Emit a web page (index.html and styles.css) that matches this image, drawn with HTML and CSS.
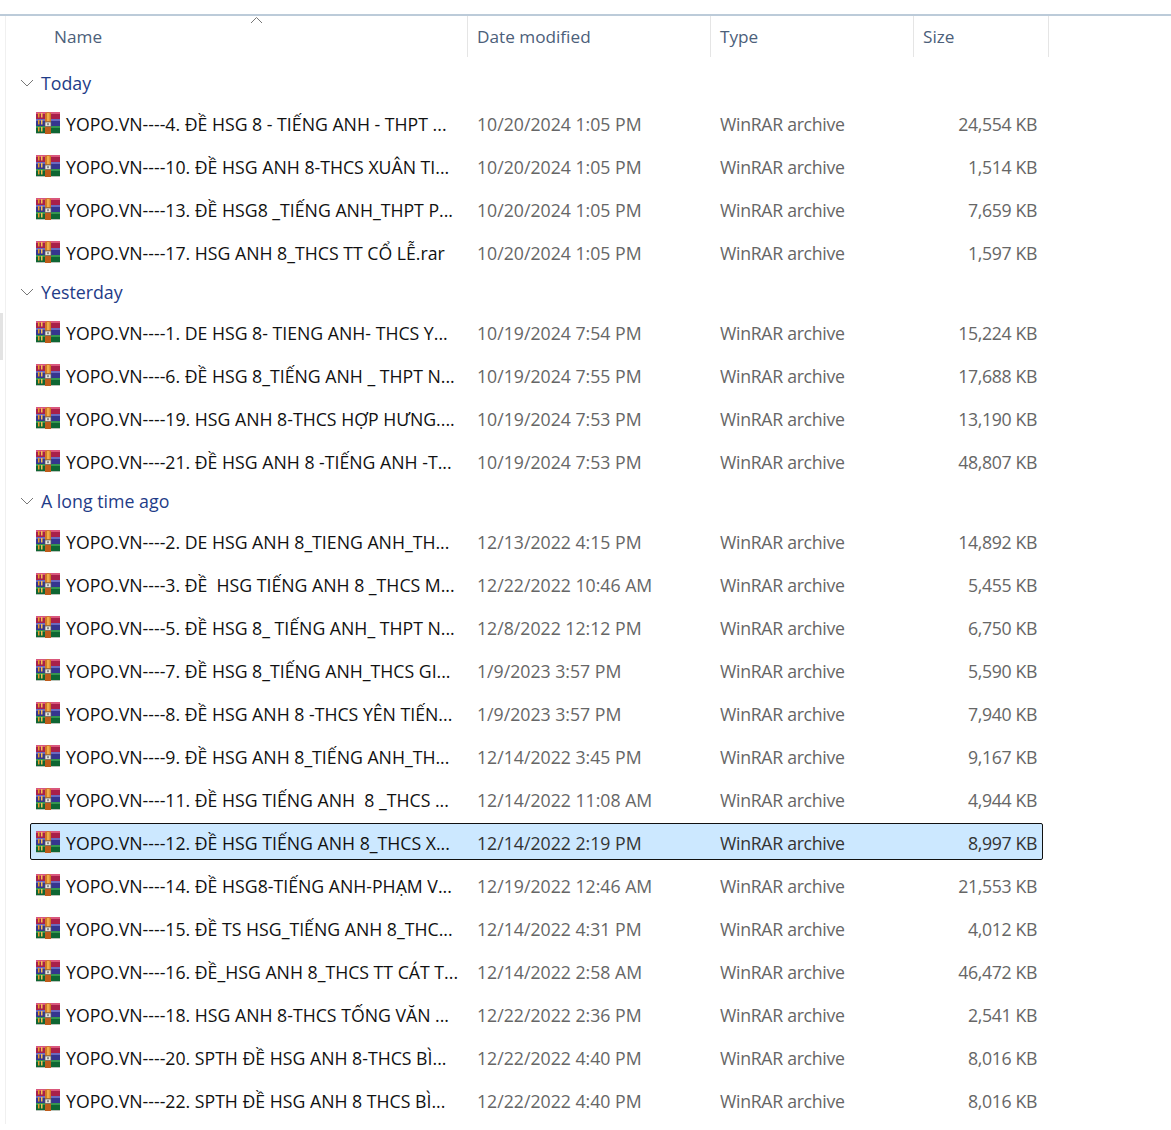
FILE: index.html
```html
<!DOCTYPE html>
<html lang="vi">
<head>
  <meta charset="UTF-8" />
  <title>Files</title>
  <link rel="stylesheet" href="styles.css">
</head>
<body>

<svg class="defs" width="0" height="0">
  <symbol id="rar" viewBox="0 0 24 22">
    <rect x="0" y="0" width="24" height="7" fill="#a8204a"/>
    <rect x="0" y="0" width="24" height="2" fill="#d9577c"/>
    <rect x="0" y="7" width="24" height="7" fill="#35358f"/>
    <rect x="0" y="7" width="24" height="2" fill="#6a6abf"/>
    <rect x="0" y="14" width="24" height="7" fill="#0f6633"/>
    <rect x="0" y="14" width="24" height="2" fill="#35964f"/>
    <rect y="21" width="24" height="1" fill="#b9c4bb"/>
    <rect x="2" y="1" width="1.500" height="4.500" fill="#e99a2a"/>
    <rect x="2" y="8" width="1.500" height="4.500" fill="#e99a2a"/>
    <rect x="2" y="15" width="1.500" height="4.500" fill="#e99a2a"/>
    <rect x="5" y="1" width="1.500" height="4.500" fill="#f2bf55"/>
    <rect x="5" y="8" width="1.500" height="4.500" fill="#f2bf55"/>
    <rect x="5" y="15" width="1.500" height="4.500" fill="#f2bf55"/>
    <path d="M9 1 L12 0 L15 1 V22 H9 Z" fill="#d17a26"/>
    <rect x="11" y="1" width="2.500" height="8" fill="#f0ad48"/>
    <rect x="9" y="10" width="6" height="4.500" fill="#e8e6df" stroke="#5a5a5a" stroke-width="0.700"/>
    <rect x="11" y="11.200" width="2" height="2" fill="#8a8a8a"/>
    <rect x="9" y="15" width="6" height="7" fill="#bd5c1c"/>
  </symbol>
</svg>

<div class="window">
  <div class="rail"><span class="thumb"></span></div>
  <main class="pane">
    <div class="headers">
      <div class="col col-name">Name
        <svg class="sort" width="13" height="8" viewBox="0 0 13 8"><path d="M1 7 L6.500 1.500 L12 7" fill="none" stroke="#777" stroke-width="1"/></svg>
      </div>
      <div class="col col-date">Date modified</div>
      <div class="col col-type">Type</div>
      <div class="col col-size">Size</div>
    </div>

    <div class="group"><svg class="chev" width="14" height="8" viewBox="0 0 14 8"><path d="M1 1 L7 7 L13 1" fill="none" stroke="#777" stroke-width="1"/></svg>Today</div>
    <div class="row"><svg class="icon"><use href="#rar"/></svg><span class="name">YOPO.VN----4. ĐỀ HSG 8 - TIẾNG ANH - THPT ...</span><span class="date">10/20/2024 1:05 PM</span><span class="type">WinRAR archive</span><span class="size">24,554 KB</span></div>
    <div class="row"><svg class="icon"><use href="#rar"/></svg><span class="name">YOPO.VN----10. ĐỀ HSG ANH 8-THCS XUÂN TI...</span><span class="date">10/20/2024 1:05 PM</span><span class="type">WinRAR archive</span><span class="size">1,514 KB</span></div>
    <div class="row"><svg class="icon"><use href="#rar"/></svg><span class="name">YOPO.VN----13. ĐỀ HSG8 _TIẾNG ANH_THPT P...</span><span class="date">10/20/2024 1:05 PM</span><span class="type">WinRAR archive</span><span class="size">7,659 KB</span></div>
    <div class="row"><svg class="icon"><use href="#rar"/></svg><span class="name">YOPO.VN----17. HSG ANH 8_THCS TT CỔ LỄ.rar</span><span class="date">10/20/2024 1:05 PM</span><span class="type">WinRAR archive</span><span class="size">1,597 KB</span></div>

    <div class="group"><svg class="chev" width="14" height="8" viewBox="0 0 14 8"><path d="M1 1 L7 7 L13 1" fill="none" stroke="#777" stroke-width="1"/></svg>Yesterday</div>
    <div class="row"><svg class="icon"><use href="#rar"/></svg><span class="name">YOPO.VN----1. DE HSG 8- TIENG ANH- THCS Y...</span><span class="date">10/19/2024 7:54 PM</span><span class="type">WinRAR archive</span><span class="size">15,224 KB</span></div>
    <div class="row"><svg class="icon"><use href="#rar"/></svg><span class="name">YOPO.VN----6. ĐỀ HSG 8_TIẾNG ANH _ THPT N...</span><span class="date">10/19/2024 7:55 PM</span><span class="type">WinRAR archive</span><span class="size">17,688 KB</span></div>
    <div class="row"><svg class="icon"><use href="#rar"/></svg><span class="name">YOPO.VN----19. HSG ANH 8-THCS HỢP HƯNG....</span><span class="date">10/19/2024 7:53 PM</span><span class="type">WinRAR archive</span><span class="size">13,190 KB</span></div>
    <div class="row"><svg class="icon"><use href="#rar"/></svg><span class="name">YOPO.VN----21. ĐỀ HSG ANH 8 -TIẾNG ANH -T...</span><span class="date">10/19/2024 7:53 PM</span><span class="type">WinRAR archive</span><span class="size">48,807 KB</span></div>

    <div class="group"><svg class="chev" width="14" height="8" viewBox="0 0 14 8"><path d="M1 1 L7 7 L13 1" fill="none" stroke="#777" stroke-width="1"/></svg>A long time ago</div>
    <div class="row"><svg class="icon"><use href="#rar"/></svg><span class="name">YOPO.VN----2. DE HSG ANH 8_TIENG ANH_TH...</span><span class="date">12/13/2022 4:15 PM</span><span class="type">WinRAR archive</span><span class="size">14,892 KB</span></div>
    <div class="row"><svg class="icon"><use href="#rar"/></svg><span class="name">YOPO.VN----3. ĐỀ &nbsp;HSG TIẾNG ANH 8 _THCS M...</span><span class="date">12/22/2022 10:46 AM</span><span class="type">WinRAR archive</span><span class="size">5,455 KB</span></div>
    <div class="row"><svg class="icon"><use href="#rar"/></svg><span class="name">YOPO.VN----5. ĐỀ HSG 8_ TIẾNG ANH_ THPT N...</span><span class="date">12/8/2022 12:12 PM</span><span class="type">WinRAR archive</span><span class="size">6,750 KB</span></div>
    <div class="row"><svg class="icon"><use href="#rar"/></svg><span class="name">YOPO.VN----7. ĐỀ HSG 8_TIẾNG ANH_THCS GI...</span><span class="date">1/9/2023 3:57 PM</span><span class="type">WinRAR archive</span><span class="size">5,590 KB</span></div>
    <div class="row"><svg class="icon"><use href="#rar"/></svg><span class="name">YOPO.VN----8. ĐỀ HSG ANH 8 -THCS YÊN TIẾN...</span><span class="date">1/9/2023 3:57 PM</span><span class="type">WinRAR archive</span><span class="size">7,940 KB</span></div>
    <div class="row"><svg class="icon"><use href="#rar"/></svg><span class="name">YOPO.VN----9. ĐỀ HSG ANH 8_TIẾNG ANH_TH...</span><span class="date">12/14/2022 3:45 PM</span><span class="type">WinRAR archive</span><span class="size">9,167 KB</span></div>
    <div class="row"><svg class="icon"><use href="#rar"/></svg><span class="name">YOPO.VN----11. ĐỀ HSG TIẾNG ANH &nbsp;8 _THCS ...</span><span class="date">12/14/2022 11:08 AM</span><span class="type">WinRAR archive</span><span class="size">4,944 KB</span></div>
    <div class="row selected"><svg class="icon"><use href="#rar"/></svg><span class="name">YOPO.VN----12. ĐỀ HSG TIẾNG ANH 8_THCS X...</span><span class="date">12/14/2022 2:19 PM</span><span class="type">WinRAR archive</span><span class="size">8,997 KB</span></div>
    <div class="row"><svg class="icon"><use href="#rar"/></svg><span class="name">YOPO.VN----14. ĐỀ HSG8-TIẾNG ANH-PHẠM V...</span><span class="date">12/19/2022 12:46 AM</span><span class="type">WinRAR archive</span><span class="size">21,553 KB</span></div>
    <div class="row"><svg class="icon"><use href="#rar"/></svg><span class="name">YOPO.VN----15. ĐỀ TS HSG_TIẾNG ANH 8_THC...</span><span class="date">12/14/2022 4:31 PM</span><span class="type">WinRAR archive</span><span class="size">4,012 KB</span></div>
    <div class="row"><svg class="icon"><use href="#rar"/></svg><span class="name">YOPO.VN----16. ĐỀ_HSG ANH 8_THCS TT CÁT T...</span><span class="date">12/14/2022 2:58 AM</span><span class="type">WinRAR archive</span><span class="size">46,472 KB</span></div>
    <div class="row"><svg class="icon"><use href="#rar"/></svg><span class="name">YOPO.VN----18. HSG ANH 8-THCS TỐNG VĂN ...</span><span class="date">12/22/2022 2:36 PM</span><span class="type">WinRAR archive</span><span class="size">2,541 KB</span></div>
    <div class="row"><svg class="icon"><use href="#rar"/></svg><span class="name">YOPO.VN----20. SPTH ĐỀ HSG ANH 8-THCS BÌ...</span><span class="date">12/22/2022 4:40 PM</span><span class="type">WinRAR archive</span><span class="size">8,016 KB</span></div>
    <div class="row"><svg class="icon"><use href="#rar"/></svg><span class="name">YOPO.VN----22. SPTH ĐỀ HSG ANH 8 THCS BÌ...</span><span class="date">12/22/2022 4:40 PM</span><span class="type">WinRAR archive</span><span class="size">8,016 KB</span></div>
  </main>
</div>

</body>
</html>
```

FILE: styles.css
```css
html, body {
  margin: 0;
  padding: 0;
  background: white;
}
body {
  font-family: 'Open Sans', 'Noto Sans', sans-serif;
  font-size: 17.7px;
  color: #666;
  height: 1130px;
  overflow: hidden;
}
.defs {
  display: block;
  height: 0;
}
.window {
  margin-top: 14px;
  border-top: 2px solid #bccbd9;
  display: flex;
  height: 1108px;
}
.rail {
  width: 5px;
  border-right: 1px solid #f0f0f0;
  padding-top: 297px;
}
.thumb {
  display: block;
  width: 3px;
  height: 47px;
  background: #e3e3e3;
}
.pane {
  flex: 1;
  padding-left: 24px;
}
.headers {
  display: grid;
  grid-template-columns: 438px 243px 203px 135px;
  height: 41px;
  margin-bottom: 13.5px;
  color: #4c607a;
  font-size: 17.2px;
}
.col {
  display: flex;
  align-items: center;
  border-right: 1px solid #e5e5e5;
  padding-left: 9px;
  box-sizing: border-box;
  position: relative;
}
.col-name {
  padding-left: 24px;
}
.sort {
  position: absolute;
  left: 220px;
  top: 0;
}
.group {
  height: 25px;
  margin-top: 8px;
  margin-bottom: 10px;
  margin-left: -10px;
  display: flex;
  align-items: center;
  gap: 7px;
  color: #1f3c88;
  font-size: 17.8px;
}
.row {
  display: grid;
  grid-template-columns: 30px 411px 243px 203px 114px;
  align-items: center;
  width: 1013px;
  height: 37px;
  margin-bottom: 6px;
  box-sizing: border-box;
  padding-left: 6px;
  white-space: nowrap;
}
.icon {
  width: 24px;
  height: 22px;
  margin-top: -3px;
}
.name {
  color: #111;
}
.type {
  letter-spacing: -0.3px;
}
.size {
  text-align: right;
  letter-spacing: -0.35px;
}
.selected {
  background: #cce8ff;
  border: 1px solid #111;
  border-radius: 2px;
  margin-top: -1.5px;
  margin-bottom: 7.5px;
  padding-left: 5px;
  padding-top: 3px;
  color: #333;
}
```
